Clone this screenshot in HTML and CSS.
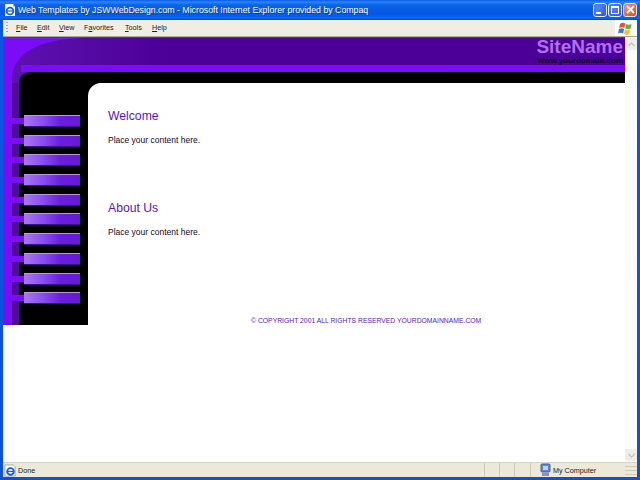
FILE: index.html
```html
<!DOCTYPE html>
<html lang="en">
<head>
<meta charset="utf-8">
<title>Web Templates by JSWWebDesign.com</title>
<link rel="stylesheet" href="styles.css">
</head>
<body>
<div class="window">
  <header class="titlebar">
    <svg class="title-icon" width="14" height="14" viewBox="0 0 14 14"><path d="M2 1h8l2 3v9H2z" fill="#fff"/><path d="M10 1v3h2z" fill="#b8c8e8"/><circle cx="7" cy="8" r="3.400" fill="none" stroke="#1c5cc8" stroke-width="1.700"/><path d="M4 8h6" stroke="#1c5cc8" stroke-width="1.200"/></svg>
    <span class="title-text">Web Templates by JSWWebDesign.com - Microsoft Internet Explorer provided by Compaq</span>
    <div class="window-buttons">
      <span class="win-btn"><i class="glyph-min"></i></span>
      <span class="win-btn"><i class="glyph-max"></i></span>
      <span class="win-btn win-close"><svg width="9" height="9" viewBox="0 0 9 9"><path d="M1 1l7 7M8 1l-7 7" stroke="#fff" stroke-width="1.800"/></svg></span>
    </div>
  </header>
  <nav class="menubar">
    <span class="grip"></span>
    <ul class="menu">
      <li class="m-file"><u>F</u>ile</li>
      <li class="m-edit"><u>E</u>dit</li>
      <li class="m-view"><u>V</u>iew</li>
      <li class="m-fav">F<u>a</u>vorites</li>
      <li class="m-tools"><u>T</u>ools</li>
      <li class="m-help"><u>H</u>elp</li>
    </ul>
    <div class="throbber">
      <svg width="16" height="15" viewBox="0 0 16 15"><path d="M2 3c2-1.500 3.500-1.500 5.300-.5L6.300 7C4.500 6 3.200 6 1.200 7z" fill="#e8502a"/><path d="M8.300 3c1.800 1 3.300 1 5.300 0l-1 4.500c-2 1-3.500 1-5.300 0z" fill="#6cb030"/><path d="M1 8c2-1 3.300-1 5.100 0l-1 4.500c-1.800-1-3.200-1-5.100 0z" fill="#3a78d8"/><path d="M7 8.500c1.800 1 3.300 1 5.300 0l-1 4.500c-2 1-3.500 1-5.300 0z" fill="#f2c020"/></svg>
    </div>
  </nav>
  <div class="viewport">
    <main class="page">
      <div class="template">
        <div class="banner">
          <svg class="banner-art" width="622" height="46" viewBox="0 0 622 46">
            <defs><linearGradient id="bg" x1="0" x2="1" y1="0" y2="0"><stop offset="0" stop-color="#5c12b0"/><stop offset=".25" stop-color="#4d0098"/><stop offset="1" stop-color="#4b0096"/></linearGradient></defs>
            <rect width="622" height="46" fill="#7a0cf6"/>
            <path d="M9 46V42C9 16 38 1 84 1H622V46Z" fill="url(#bg)"/>
            <path d="M18 28H622V35H18Z" fill="#7a0cf6"/>
            <path d="M16 46C16 40 20 35 28 35H622V46Z" fill="#000"/>
          </svg>
          <div class="brand">
            <div class="brand-name">SiteName</div>
            <div class="brand-url">www.yourdomain.com</div>
          </div>
        </div>
        <div class="columns">
          <aside class="sidebar">
            <div class="nav-row"><span class="link"></span><a class="nav-btn"></a></div>
            <div class="nav-row"><span class="link"></span><a class="nav-btn"></a></div>
            <div class="nav-row"><span class="link"></span><a class="nav-btn"></a></div>
            <div class="nav-row"><span class="link"></span><a class="nav-btn"></a></div>
            <div class="nav-row"><span class="link"></span><a class="nav-btn"></a></div>
            <div class="nav-row"><span class="link"></span><a class="nav-btn"></a></div>
            <div class="nav-row"><span class="link"></span><a class="nav-btn"></a></div>
            <div class="nav-row"><span class="link"></span><a class="nav-btn"></a></div>
            <div class="nav-row"><span class="link"></span><a class="nav-btn"></a></div>
            <div class="nav-row"><span class="link"></span><a class="nav-btn"></a></div>
          </aside>
          <section class="content">
            <article class="block">
              <h2>Welcome</h2>
              <p>Place your content here.</p>
            </article>
            <article class="block">
              <h2>About Us</h2>
              <p>Place your content here.</p>
            </article>
            <footer class="copyright">© COPYRIGHT 2001 ALL RIGHTS RESERVED YOURDOMAINNAME.COM</footer>
          </section>
        </div>
      </div>
    </main>
    <div class="scrollbar">
      <span class="sb-btn"><svg width="7" height="5" viewBox="0 0 7 5"><path d="M.5 4l3-3 3 3" fill="none" stroke="#c4c8c0" stroke-width="1.500"/></svg></span>
      <span class="sb-btn"><svg width="7" height="5" viewBox="0 0 7 5"><path d="M.5 1l3 3 3-3" fill="none" stroke="#c4c8c0" stroke-width="1.500"/></svg></span>
    </div>
  </div>
  <footer class="statusbar">
    <div class="status-main">
      <svg width="13" height="13" viewBox="0 0 14 14"><path d="M1 1h9l2 2v10H1z" fill="#fff" stroke="#9ab"/><circle cx="7" cy="8" r="3.600" fill="none" stroke="#1c5cc8" stroke-width="2"/><path d="M3.500 8h7" stroke="#1c5cc8" stroke-width="1.300"/></svg>
      <span>Done</span>
    </div>
    <span class="status-cell cell-a"></span>
    <span class="status-cell cell-b"></span>
    <span class="status-cell cell-c"></span>
    <div class="status-zone">
      <svg width="11" height="14" viewBox="0 0 11 14"><rect x="1" y="1" width="9" height="8" rx="1" fill="#5f86d8" stroke="#48608f"/><rect x="3" y="3" width="5" height="4" fill="#bcd4f4"/><rect x="2" y="10" width="7" height="3" fill="#8a94b0"/></svg>
      <span>My Computer</span>
    </div>
    <span class="status-grip"></span>
  </footer>
</div>
</body>
</html>
```
FILE: styles.css
```css
html, body { margin: 0; padding: 0; background: #fff; }
body { width: 640px; height: 480px; overflow: hidden; font-family: "Liberation Sans", Arial, sans-serif; }
.window { width: 640px; height: 480px; box-sizing: border-box; padding: 0 3px 3px; display: flex; flex-direction: column; background: linear-gradient(#0a58e0, #0a58e0 20px, #0c50dc 100%); }

.titlebar { height: 20px; margin: 0 -3px; padding: 0 3px; display: flex; align-items: center; background: linear-gradient(#0a5ae8 0, #2a86f6 2px, #0a62ea 5px, #0558e4 14px, #0a68f2 18px, #0448d2 20px); flex: none; }
.title-icon { margin-right: 1px; flex: none; }
.title-text { flex: 1; color: #fff; font-size: 8.75px; white-space: nowrap; text-shadow: 1px 1px 0 #0a3aa8; }
.window-buttons { display: flex; gap: 1px; margin-bottom: 1px; }
.win-btn { width: 14px; height: 14px; box-sizing: border-box; border: 1px solid #e6eefc; border-radius: 3px; background: radial-gradient(circle at 30% 30%, #5a88ee, #2a54d4); display: flex; align-items: center; justify-content: center; }
.win-close { background: radial-gradient(circle at 30% 30%, #ec9478, #d8481e); }
.glyph-min { width: 5px; height: 2px; background: #fff; margin: 7px 4px 0 0; }
.glyph-max { width: 8px; height: 8px; box-sizing: border-box; border: 1px solid #fff; border-top-width: 2px; }

.menubar { height: 17px; flex: none; display: flex; align-items: center; background: #f0eee2; border-bottom: 1px solid #aca899; box-sizing: border-box; }
.grip { width: 2px; height: 12px; margin-left: 3px; background: repeating-linear-gradient(#a8a494 0 1px, transparent 1px 3px); flex: none; }
.menu { list-style: none; margin: 0; padding: 0 0 2px; display: flex; flex: 1; font-size: 7.2px; color: #222; }
.m-file { margin-left: 8px; width: 21px; }
.m-edit { width: 22px; }
.m-view { width: 25px; }
.m-fav { width: 41px; }
.m-tools { width: 27px; }
.throbber { width: 22px; height: 16px; background: #fff; display: flex; align-items: center; justify-content: center; flex: none; }

.viewport { flex: 1; min-height: 0; display: flex; background: #fff; }
.page { flex: 1; min-width: 0; }
.scrollbar { width: 12px; flex: none; background: #fbfbf8; display: flex; flex-direction: column; justify-content: space-between; padding: 1px 0; box-sizing: border-box; }
.sb-btn { height: 12px; background: #eeeee6; display: flex; align-items: center; justify-content: center; border-radius: 2px; }

.template { height: 288px; display: flex; flex-direction: column; background: #000; }
.banner { height: 46px; flex: none; display: grid; }
.banner-art { grid-area: 1 / 1; display: block; }
.brand { grid-area: 1 / 1; justify-self: end; padding: 1px 2px 0 0; text-align: right; }
.brand-name { font-size: 19px; font-weight: 700; line-height: 17px; color: #b070ee; }
.brand-url { margin-top: 2px; font-size: 8px; font-weight: 700; line-height: 8px; color: #0c0020; }

.columns { flex: 1; min-height: 0; display: flex; }
.sidebar { width: 85px; flex: none; box-sizing: border-box; padding-top: 32px; display: flex; flex-direction: column; gap: 7.7px; background: linear-gradient(90deg, #7a0cf6 0 9px, #4d0f98 9px 16px, #000 16px); }
.nav-row { height: 12px; display: flex; align-items: center; flex: none; }
.link { width: 21px; height: 6px; background: #7a0cf6; flex: none; }
.nav-btn { width: 56px; height: 12px; box-sizing: border-box; border-top: 1px solid #b898e0; border-bottom: 1px solid #3a1080; background: linear-gradient(90deg, #a878f2 0, #8a4cf0 35%, #6a1ee0 65%, #6818d8 100%); }

.content { flex: 1; min-width: 0; background: #fff; border-top-left-radius: 13px; padding: 26px 0 0 20px; box-sizing: border-box; display: flex; flex-direction: column; }
.block { height: 92px; flex: none; }
.block h2 { margin: 0; font-size: 12.2px; font-weight: 400; line-height: 14px; color: #5a14c8; }
.block p { margin: 12px 0 0; font-size: 8.5px; line-height: 10px; color: #14082a; }
.copyright { margin: 24px 0 0 143px; font-size: 6.8px; line-height: 8px; color: #5a20c0; white-space: nowrap; }

.statusbar { height: 15px; flex: none; display: flex; align-items: center; background: #ece9d8; font-size: 7.2px; color: #222; border-top: 1px solid #d8d4c4; box-sizing: border-box; }
.status-main { flex: 1; display: flex; align-items: center; gap: 1px; padding-left: 1px; }
.status-cell { width: 14px; height: 100%; border-left: 1px solid #cfcbb8; flex: none; }
.cell-c { width: 15px; }
.status-zone { width: 95px; height: 100%; box-sizing: border-box; border-left: 1px solid #cfcbb8; padding-left: 9px; display: flex; align-items: center; gap: 2px; flex: none; }
.status-grip { width: 12px; height: 100%; flex: none; background: repeating-linear-gradient(#ece9d8 0 3px, #cfcbba 3px 4px); }
```
